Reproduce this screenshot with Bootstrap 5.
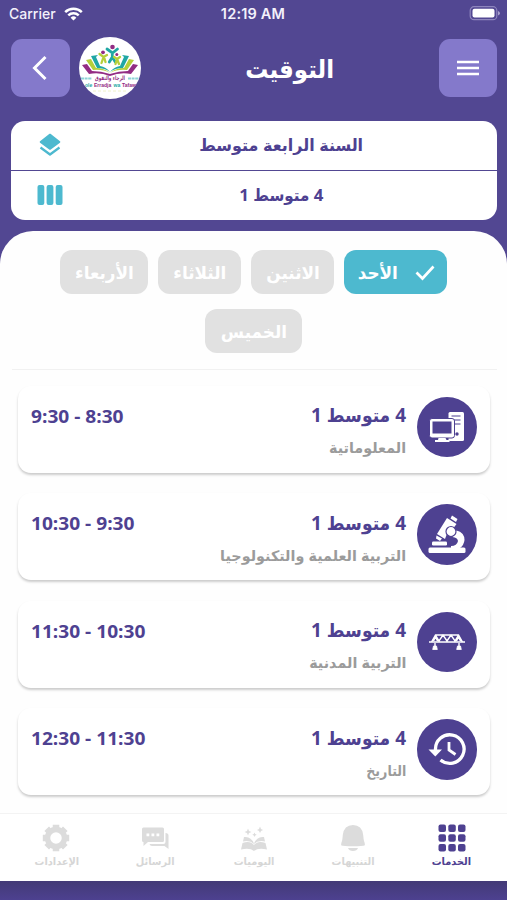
<!DOCTYPE html>
<html lang="ar" dir="rtl">
<head>
<meta charset="utf-8">
<meta name="viewport" content="width=device-width, initial-scale=1">
<title>التوقيت</title>
<link href="https://cdn.jsdelivr.net/npm/bootstrap@5.3.0/dist/css/bootstrap.min.css" rel="stylesheet">
<style>
:root{--brand:#524792;--ink:#4e4191;--teal:#4db9cf;--soft:#8479cb}
body{font-family:"Open Sans","DejaVu Sans Condensed","DejaVu Sans",sans-serif;font-weight:700;color:var(--ink);background:var(--brand);height:900px;overflow:hidden;line-height:1.2}
svg{display:block;flex:none}
.fit{display:inline-block;white-space:nowrap;transform:scaleX(var(--sx,1));transform-origin:var(--ox,center)}
.statusbar{height:27px;font:500 14px Inter,"Liberation Sans",sans-serif;color:#f3f1fb;padding:0 7px 0 9px}
.statusbar>*{flex:1 1 0}
.clock{font-weight:600;font-size:14.5px;letter-spacing:.2px;padding-right:3px}
.topbar{height:81px;padding:1px 10px 0 11px}
.sq{width:58.5px;height:58.5px;border-radius:11px;background:var(--soft);border:0;padding:0}
.logo{width:62px;height:62px;margin-left:1px}
.screen-title{font-size:25px;color:#fff;--sx:1.02}
.picker{margin:12.5px 10px 0 11px;border-radius:14px;background:#fff;overflow:hidden;height:99px}
.picker-row{height:49.5px;font-size:16.5px;padding-left:24px}
.picker-row+.picker-row{border-top:1px solid var(--brand)}
.picker-row .caption-text{flex:1;text-align:center;--sx:1.075}
.picker-row+.picker-row .caption-text{--sx:1.02}
.sheet{margin-top:11px;border-radius:33px 33px 0 0;background:#fefefe;height:650.5px}
.days{padding:19px 50px 0;gap:15px 10px}
.chip{height:44px;border-radius:12px;background:#e1e1e1;color:#fff;font-size:17.5px;width:83px;padding-top:1px;--sx:1.07}
.chip.on{background:var(--teal);width:102.5px;gap:18px;padding-left:3px}
.chip.w-wed{width:88px}
.chip.w-thu{width:97px}
.rule{height:1px;background:#f1f1f1;margin:16.5px 10px 0 12px}
.lessons{padding:15.5px 17px 0 18px;gap:20.5px}
.lesson{height:87px;border-radius:13px;background:#fff;box-shadow:0 2px 2.5px rgba(0,0,0,.2);padding:0 13px 0 13px}
.disc{width:60.5px;height:60.5px;border-radius:50%;background:var(--ink);margin-top:11px}
.lesson-text{padding:18.5px 10.5px 0 0;--ox:right}
.group{font-size:19px;height:23px;line-height:23px}
.subject{font-size:14.5px;height:20px;line-height:20px;margin-top:11px;color:#9b9b9b;--sx:1.1}
.subject.narrow{--sx:.97}
.hours{font-size:18.5px;line-height:23px;padding-top:18px;--sx:1.033;--ox:left}
.tabs{height:68px;background:#fff;border-top:1px solid #f3f3f3;padding:0 6px 0 7px}
.tab-item{flex:1 1 0;font-size:10.2px;color:#d6d6d6;padding-top:9.5px;--sx:1.07}
.tab-item.on{color:var(--ink)}
.tab-item .cap{height:14px;line-height:14px;margin-top:2px}
.base{height:19px;background:linear-gradient(#433a76,#4d4190)}
</style>
</head>
<body>
<div class="statusbar d-flex align-items-center" dir="ltr">
  <div class="d-flex align-items-center gap-2"><span>Carrier</span>
    <svg width="19" height="14" viewBox="0 0 19 14" fill="none" stroke="#fff" stroke-width="2.5"><path d="M1.2 5.2a11.8 11.8 0 0 1 16.6 0M4.3 8.4a7.4 7.4 0 0 1 10.4 0"/><path d="M9.5 13.6 6.6 10.7a4.1 4.1 0 0 1 5.8 0z" fill="#fff" stroke="none"/></svg>
  </div>
  <div class="clock text-center">12:19 AM</div>
  <div class="d-flex justify-content-end"><svg width="31" height="15" viewBox="0 0 31 15"><rect x="1.200" y=".7" width="26.6" height="13" rx="3.8" fill="none" stroke="#8e85bd" stroke-width="1.2"/><rect x="3.500" y="2.8" width="22" height="8.800" rx="2" fill="#fff"/><path d="M29 5v4.6q2-1 2-2.3T29 5" fill="#a9a1cf"/></svg></div>
</div>
<header class="topbar d-flex align-items-center justify-content-between" dir="ltr">
  <div class="d-flex align-items-center gap-2">
    <button class="sq d-flex align-items-center justify-content-center" aria-label="رجوع"><svg width="20" height="26" viewBox="0 0 20 26" fill="none" stroke="#fff" stroke-width="3"><path d="M15.500 2 4.500 13l11 11"/></svg></button>
    <div class="logo"><svg width="62" height="62" viewBox="0 0 62 62">
      <defs><clipPath id="disc"><circle cx="31" cy="31" r="31"/></clipPath></defs>
      <circle cx="31" cy="31" r="31" fill="#fff"/>
      <path d="M3 28l5-1 5 7q9 0 18 3 9-3 18-3l5-7 5 1-7 9q-11-2-21 2-10-4-21-2z" fill="#922c83"/>
      <path d="M7 23l5-1 5 9q8 0 14 5 6-5 14-5l5-9 5 1-7 10q-10-1-17 3-7-4-17-3z" fill="#b5cf3a"/>
      <path d="M12 19l7-1-2 2 4 9q6 1 10 6 4-5 10-6l4-9-2-2 7 1-6 12q-8 0-13 4-5-4-13-4z" fill="#20a7a4"/>
      <path d="M23 28q5 1 8 6 3-5 8-6l-3-6h-10z" fill="#fff"/>
      <g fill="none" stroke-width="2.300" stroke-linecap="round"><path d="M28 12l5.500 4 5-4M33.300 17v3l-3 5M33.300 20l3 5" stroke="#20a7a4" stroke-width="2.800"/><path d="M20.500 17l4 3 3.500-2M24.500 20l-2 6M25 20l1.500 5M35 20l3 2 3-2M38 22l-1.500 5M38 22l2 5" stroke="#b5cf3a"/></g>
      <circle cx="33.500" cy="10" r="2.300" fill="#922c83"/><circle cx="24" cy="15.300" r="1.900" fill="#922c83"/><circle cx="37.800" cy="17.500" r="1.500" fill="#922c83"/>
      <g clip-path="url(#disc)" font-family="DejaVu Sans"><text x="31" y="43" font-size="6" text-anchor="middle" direction="rtl" textLength="30" lengthAdjust="spacingAndGlyphs" fill="#922c83">الرجاء والتفوق</text><path d="M2 41.500h11M49 41.500h11" stroke="#8ed3d6" stroke-width="1.800" stroke-dasharray="3 .6"/>
      <text y="50" font-size="5" font-weight="700" font-family="Liberation Sans" direction="ltr"><tspan x="6" fill="#20a7a4">ole</tspan><tspan x="15" fill="#922c83">Erradja</tspan><tspan x="34.500" fill="#20a7a4">wa</tspan><tspan x="43" fill="#922c83">Tafawo</tspan></text></g>
      <path d="M14 54h34" stroke="#eef2c8" stroke-dasharray="3 2"/>
    </svg></div>
  </div>
  <h1 class="screen-title m-0 fw-bold"><span class="fit">التوقيت</span></h1>
  <div class="d-flex justify-content-end"><button class="sq d-flex align-items-center justify-content-center" aria-label="القائمة"><svg width="24" height="18" viewBox="0 0 24 18" stroke="#fff" stroke-width="2.600"><path d="M1 3h22M1 9h22M1 15h22"/></svg></button></div>
</header>

<section class="picker">
  <div class="picker-row d-flex align-items-center"><div class="caption-text"><span class="fit">السنة الرابعة متوسط</span></div>
    <svg width="30" height="26" viewBox="0 0 30 26" fill="#4db9cf"><path d="M15 2.500 24.500 10 15 17 5.500 10z" stroke="#4db9cf" stroke-width="1.600" stroke-linejoin="round"/><path d="M5.500 15.500 15 22.500l9.500-7" fill="none" stroke="#4db9cf" stroke-width="2.300" stroke-linejoin="round"/></svg></div>
  <div class="picker-row d-flex align-items-center"><div class="caption-text"><span class="fit">4 متوسط 1</span></div>
    <svg width="30" height="26" viewBox="0 0 30 26" fill="#4db9cf"><rect x="2.500" y="3" width="6.800" height="20" rx="2"/><rect x="11.600" y="3" width="6.800" height="20" rx="2"/><rect x="20.700" y="3" width="6.800" height="20" rx="2"/></svg></div>
</section>

<main class="sheet d-flex flex-column">
  <div class="days d-flex flex-wrap justify-content-center">
    <div class="chip on d-flex align-items-center justify-content-center"><svg width="20" height="17" viewBox="0 0 20 17" fill="none" stroke="#fff" stroke-width="2.700"><path d="m1.500 8.500 6 6L18.500 2.500"/></svg><span class="fit">الأحد</span></div>
    <div class="chip d-flex align-items-center justify-content-center"><span class="fit">الاثنين</span></div>
    <div class="chip d-flex align-items-center justify-content-center"><span class="fit">الثلاثاء</span></div>
    <div class="chip w-wed d-flex align-items-center justify-content-center"><span class="fit">الأربعاء</span></div>
    <div class="chip w-thu d-flex align-items-center justify-content-center"><span class="fit">الخميس</span></div>
  </div>
  <div class="rule"></div>
  <div class="lessons d-flex flex-column flex-grow-1">
    <article class="lesson d-flex">
      <div class="disc d-flex align-items-center justify-content-center"><svg width="36" height="32" viewBox="0 0 36 32"><rect x="19.500" y="1" width="15.500" height="29" rx="1.500" fill="#fff"/><path d="M22.500 5h9M24 9h7.500M26 13h5.500" stroke="#4e4191" stroke-width="1.200"/><circle cx="28" cy="23" r="1.700" fill="#4e4191"/><rect x=".5" y="7.500" width="25" height="19.500" rx="2.500" fill="#fff" stroke="#4e4191"/><rect x="3.500" y="10.500" width="19" height="12" fill="#4e4191"/><path d="M9.500 27h7l1 2h3v2H6v-2h3z" fill="#fff"/></svg></div>
      <div class="lesson-text"><div class="group"><span class="fit">4 متوسط 1</span></div><div class="subject"><span class="fit">المعلوماتية</span></div></div>
      <div class="hours me-auto" dir="ltr"><span class="fit">9:30 - 8:30</span></div>
    </article>
    <article class="lesson d-flex">
      <div class="disc d-flex align-items-center justify-content-center"><svg width="40" height="40" viewBox="0 0 40 40" fill="#fff"><rect x="1.500" y="33.500" width="37" height="5.500" rx="1.500"/><rect x="5" y="27.500" width="15" height="4" rx="1.200"/><path d="M20 4 29.500 10l-3 4-4 1-3 6L18 25 10 20z"/><path d="m25 1.500 5.500 3.500-1.500 3-5.500-3.500zM9.500 21.500l5.500 3-2 2.500-4-2.500z"/><circle cx="24" cy="17.500" r="5" stroke="#4e4191" stroke-width="1.200"/><path d="M29.500 16.500q8 2 8 9.500-.5 5-4.500 8h-9v-2q6 0 7-5-.5-3.500-5.500-4 4.500-2 4-6.500z"/></svg></div>
      <div class="lesson-text"><div class="group"><span class="fit">4 متوسط 1</span></div><div class="subject"><span class="fit">التربية العلمية والتكنولوجيا</span></div></div>
      <div class="hours me-auto" dir="ltr"><span class="fit">10:30 - 9:30</span></div>
    </article>
    <article class="lesson d-flex">
      <div class="disc d-flex align-items-center justify-content-center"><svg width="38" height="18" viewBox="0 0 38 18" fill="none" stroke="#fff" stroke-width="1.400"><path d="M1 9h36M3.500 9 7.500 2h23l4 7M7.500 2l3.500 6 4-6 4 6 4-6 4 6 3.500-6M5.500 8l2-4 2 4M28.500 8l2-4 2 4M7 10v5M31 10v5"/><path d="M5.500 13h3l.8 3.500H4.700zM29.500 13h3l.8 3.500h-4.600z" fill="#fff" stroke-width=".8"/></svg></div>
      <div class="lesson-text"><div class="group"><span class="fit">4 متوسط 1</span></div><div class="subject"><span class="fit">التربية المدنية</span></div></div>
      <div class="hours me-auto" dir="ltr"><span class="fit">11:30 - 10:30</span></div>
    </article>
    <article class="lesson d-flex">
      <div class="disc d-flex align-items-center justify-content-center"><svg width="38" height="34" viewBox="0 0 38 34" fill="none" stroke="#fff"><path d="M7.500 18A14.300 14.300 0 1 1 12.500 28" stroke-width="3.300"/><path d="M.5 17.500h13.500l-6.700 7z" fill="#fff" stroke="none"/><path d="M21 10v8l6.500 4.500" stroke-width="2.800"/></svg></div>
      <div class="lesson-text"><div class="group"><span class="fit">4 متوسط 1</span></div><div class="subject narrow"><span class="fit">التاريخ</span></div></div>
      <div class="hours me-auto" dir="ltr"><span class="fit">12:30 - 11:30</span></div>
    </article>
  </div>
  <nav class="tabs d-flex">
    <div class="tab-item on d-flex flex-column align-items-center"><svg width="28" height="28" viewBox="0 0 28 28" fill="#4e4191"><g id="dots"><rect x=".5" y=".5" width="7.500" height="7.500" rx="2"/><rect x="10.300" y=".5" width="7.500" height="7.500" rx="2"/><rect x="20" y=".5" width="7.500" height="7.500" rx="2"/></g><use href="#dots" y="9.700"/><use href="#dots" y="19.500"/></svg><div class="cap"><span class="fit">الخدمات</span></div></div>
    <div class="tab-item d-flex flex-column align-items-center"><svg width="26" height="28" viewBox="0 0 26 28" fill="#dcdcdc"><path d="M2 17q.500-2 .8-6Q4 1 13 1t10.200 10q.3 4 .8 6 1.500 4 .5 4.500-1.500.8-11.500.8T1.500 21.500Q.500 21 2 17zM8 24h10q-1 3-5 3t-5-3z"/></svg><div class="cap"><span class="fit">التنبيهات</span></div></div>
    <div class="tab-item d-flex flex-column align-items-center"><svg width="28" height="28" viewBox="0 0 28 28" fill="#dcdcdc"><path d="M2.500 19q7.500-3 11.500 2 4-5 11.500-2l1.500 6.500q-9-2-13 1.500-4-3.500-13-1.500z"/><path d="M4 13q7-1 10 6.500Q17 12 24 13l1 4.500q-7-1.500-11 2.500-4-4-11-2.500z"/><path d="m8 4.500 1 2.500 2.500 1L9 9l-1 2.500L7 9 4.500 8 7 7zM20 2.500l1 2.500 2 1-2 1-1 2-1-2-2-1 2-1zM14.500 8.500l.7 1.500 1.500.7-1.500.7-.7 1.500-.7-1.500-1.500-.7 1.500-.7z"/></svg><div class="cap"><span class="fit">اليوميات</span></div></div>
    <div class="tab-item d-flex flex-column align-items-center"><svg width="28" height="28" viewBox="0 0 28 28" fill="#dcdcdc"><path d="M2.500 3.500h19Q23 3.500 23 5v11.500q0 1.500-1.500 1.500H7l-4.500 4V18Q1 18 1 16.500V5q0-1.500 1.500-1.500zM24.500 9q3 0 3 2.500V25l-4-3H11q-2 0-2.500-2h14q2 0 2-2z"/><path d="M5.500 9.500h2.800v2.800H5.500zM10.500 9.500h2.800v2.800h-2.800zM15.500 9.500h2.800v2.800h-2.800z" fill="#fff"/></svg><div class="cap"><span class="fit">الرسائل</span></div></div>
    <div class="tab-item d-flex flex-column align-items-center"><svg width="28" height="28" viewBox="0 0 28 28"><circle cx="14" cy="14" r="8.500" fill="none" stroke="#dcdcdc" stroke-width="5.500"/><path d="M14 .800v4M14 23.200v4M.800 14h4M23.200 14h4M4.700 4.700l3 3M20.300 20.300l3 3M4.700 23.300l3-3M20.300 7.700l3-3" stroke="#dcdcdc" stroke-width="6.500"/></svg><div class="cap"><span class="fit">الإعدادات</span></div></div>
  </nav>
</main>
<div class="base"></div>
<script src="https://cdn.jsdelivr.net/npm/bootstrap@5.3.0/dist/js/bootstrap.bundle.min.js"></script>
</body>
</html>
